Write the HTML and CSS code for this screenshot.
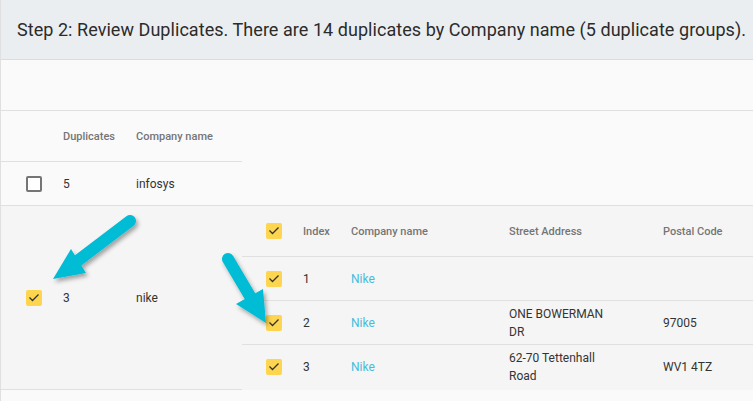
FILE: index.html
```html
<!DOCTYPE html>
<html lang="en">
<head>
  <meta charset="UTF-8">
  <meta name="viewport" content="width=device-width, initial-scale=1.0">
  <title>Review Duplicates</title>
  <link rel="stylesheet" href="styles.css">
</head>
<body>
  <div class="page">
    <div class="step-header">Step 2: Review Duplicates. There are 14 duplicates by Company name (5 duplicate groups).</div>
    <div class="toolbar"></div>

    <div class="groups">
      <div class="group-head">
        <div class="cell cell-check"></div>
        <div class="cell cell-dup">Duplicates</div>
        <div class="cell cell-name">Company name</div>
      </div>

      <div class="group-row">
        <div class="cell cell-check"><span class="checkbox"></span></div>
        <div class="cell cell-dup">5</div>
        <div class="cell cell-name">infosys</div>
      </div>

      <div class="group-open">
        <div class="group-row group-row-open">
          <div class="cell cell-check"><span class="checkbox checked"><svg viewBox="0 0 16 16"><path d="M3.5 7.5 L6.5 10.5 L12.5 4.5"/></svg></span></div>
          <div class="cell cell-dup">3</div>
          <div class="cell cell-name">nike</div>
        </div>

        <div class="details">
          <div class="detail-row detail-head">
            <div class="cell d-check"><span class="checkbox checked"><svg viewBox="0 0 16 16"><path d="M3.5 7.5 L6.5 10.5 L12.5 4.5"/></svg></span></div>
            <div class="cell d-index">Index</div>
            <div class="cell d-name">Company name</div>
            <div class="cell d-street">Street Address</div>
            <div class="cell d-postal">Postal Code</div>
          </div>
          <div class="detail-row">
            <div class="cell d-check"><span class="checkbox checked"><svg viewBox="0 0 16 16"><path d="M3.5 7.5 L6.5 10.5 L12.5 4.5"/></svg></span></div>
            <div class="cell d-index">1</div>
            <div class="cell d-name"><a class="link">Nike</a></div>
            <div class="cell d-street"></div>
            <div class="cell d-postal"></div>
          </div>
          <div class="detail-row">
            <div class="cell d-check"><span class="checkbox checked"><svg viewBox="0 0 16 16"><path d="M3.5 7.5 L6.5 10.5 L12.5 4.5"/></svg></span></div>
            <div class="cell d-index">2</div>
            <div class="cell d-name"><a class="link">Nike</a></div>
            <div class="cell d-street"><span class="wrap">ONE BOWERMAN DR</span></div>
            <div class="cell d-postal">97005</div>
          </div>
          <div class="detail-row detail-last">
            <div class="cell d-check"><span class="checkbox checked"><svg viewBox="0 0 16 16"><path d="M3.5 7.5 L6.5 10.5 L12.5 4.5"/></svg></span></div>
            <div class="cell d-index">3</div>
            <div class="cell d-name"><a class="link">Nike</a></div>
            <div class="cell d-street"><span class="wrap">62-70 Tettenhall Road</span></div>
            <div class="cell d-postal">WV1 4TZ</div>
          </div>
        </div>
      </div>
    </div>

    <!-- annotation arrows drawn over the table -->
    <svg class="arrows" viewBox="0 0 753 401">
      <defs>
        <filter id="shadow" x="-20%" y="-20%" width="140%" height="140%">
          <feDropShadow dx="2" dy="3" stdDeviation="2" flood-color="#000" flood-opacity="0.35"/>
        </filter>
      </defs>
      <g filter="url(#shadow)" fill="#00bcd4" stroke="#00bcd4">
        <line x1="130" y1="221" x2="76" y2="262" stroke-width="12" stroke-linecap="round"/>
        <polygon points="53,279 71,249 86,273" stroke="none"/>
        <line x1="228" y1="259" x2="254" y2="303" stroke-width="12" stroke-linecap="round"/>
        <polygon points="266,323 236,304 263,289" stroke="none"/>
      </g>
    </svg>
  </div>
</body>
</html>
```

FILE: styles.css
```css
* {
  box-sizing: border-box;
}
body {
  margin: 0;
  background-color: #fafafa;
  font-family: 'Roboto', 'Liberation Sans', sans-serif;
  color: #333;
}
.page {
  position: relative;
  width: 753px;
  height: 401px;
  overflow: hidden;
  border-left: 1px solid #e0e0e0;
  background-color: #fafafa;
}
.step-header {
  height: 60px;
  padding-left: 16px;
  display: flex;
  align-items: center;
  background-color: #ebeef1;
  border-bottom: 1px solid #dcdcdc;
  font-size: 18px;
  letter-spacing: 0.05px;
  white-space: nowrap;
  color: #2b2b2b;
}
.toolbar {
  height: 51px;
  border-bottom: 1px solid #e0e0e0;
}
.groups {
  display: flex;
  flex-direction: column;
}
.group-head,
.group-row {
  display: grid;
  grid-template-columns: 62px 73px 106px;
  width: 241px;
  border-bottom: 1px solid #e0e0e0;
}
.group-head {
  height: 51px;
}
.group-row {
  height: 44px;
}
.cell {
  display: flex;
  align-items: center;
  font-size: 12px;
}
.cell-check {
  padding-left: 25px;
}
.group-head .cell,
.detail-head .cell {
  font-size: 11px;
  font-weight: 500;
  color: #757575;
}
.group-open {
  display: flex;
}
.group-row-open {
  height: 184px;
  background-color: #f5f5f5;
}
.details {
  flex: 1;
  background-color: #f5f5f5;
  border-top: 1px solid #e0e0e0;
  margin-top: -1px;
  height: 185px;
}
.detail-row {
  display: grid;
  grid-template-columns: 61px 48px 158px 154px 1fr;
  height: 44px;
  border-bottom: 1px solid #e0e0e0;
}
.detail-head {
  height: 51px;
}
.detail-last {
  border-bottom: none;
}
.d-check {
  padding-left: 24px;
}
.wrap {
  display: block;
  width: 100px;
  line-height: 18px;
}
.link {
  color: #45bcdb;
  text-decoration: none;
}
.checkbox {
  display: inline-block;
  width: 16px;
  height: 16px;
  border: 2px solid #757575;
  border-radius: 2px;
  background-color: #fff;
}
.checkbox.checked {
  border: none;
  background-color: #fdd54f;
}
.checkbox svg {
  display: block;
  width: 16px;
  height: 16px;
  fill: none;
  stroke: #333;
  stroke-width: 1.3;
}
.arrows {
  position: absolute;
  left: -1px;
  top: 0;
  width: 753px;
  height: 401px;
  pointer-events: none;
}
```
